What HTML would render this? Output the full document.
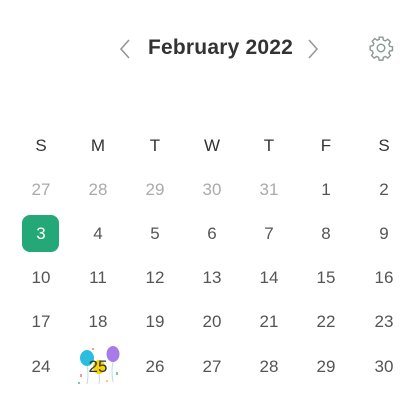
<!DOCTYPE html>
<html><head><style>
body{margin:0;width:420px;height:420px;background:#fff;font-family:"Liberation Sans",sans-serif;position:relative;overflow:hidden}
.t{position:absolute;font-size:21px;font-weight:bold;color:#333;left:148px;top:36px;letter-spacing:0.2px}
.c{position:absolute;width:50px;text-align:center;font-size:17px;color:#555;line-height:20px}
.g{color:#aaa}
.h{color:#333}
.sel{position:absolute;left:22px;top:215px;width:37px;height:37px;border-radius:8px;background:#24a878}
</style></head><body>
<svg style="position:absolute;left:118px;top:38px" width="14" height="22"><path d="M11 2 L3 11 L11 20" stroke="#999" stroke-width="1.6" fill="none"/></svg>
<div class="t">February 2022</div>
<svg style="position:absolute;left:306px;top:38px" width="14" height="22"><path d="M3 2 L11 11 L3 20" stroke="#999" stroke-width="1.6" fill="none"/></svg>
<svg style="position:absolute;left:368px;top:35px" width="26" height="26" viewBox="0 0 24 24"><path fill="none" stroke="#8a9a92" stroke-width="1.3" d="M10.3 2h3.4l.5 2.6 1.9.8 2.2-1.5 2.4 2.4-1.5 2.2.8 1.9 2.6.5v3.4l-2.6.5-.8 1.9 1.5 2.2-2.4 2.4-2.2-1.5-1.9.8-.5 2.6h-3.4l-.5-2.6-1.9-.8-2.2 1.5-2.4-2.4 1.5-2.2-.8-1.9L2 13.7v-3.4l2.6-.5.8-1.9-1.5-2.2 2.4-2.4 2.2 1.5 1.9-.8z"/><circle cx="12" cy="12" r="3.5" fill="none" stroke="#8a9a92" stroke-width="1.3"/></svg>
<div class="sel"></div>
<div id="grid"></div>
<svg style="position:absolute;left:76px;top:344px" width="46" height="42">
<ellipse cx="11" cy="14" rx="7" ry="8" fill="#2bbde0"/><ellipse cx="37" cy="10" rx="6.5" ry="8" fill="#a97be8"/><ellipse cx="23" cy="23" rx="6" ry="7" fill="#f5d400"/>
<path d="M11 22 q2 8 0 18 M37 18 q-2 8 0 20 M23 30 q1 5 0 10" stroke="#bde" stroke-width="1" fill="none"/>
<rect x="4" y="30" width="2" height="3" fill="#e9a"/><rect x="40" y="28" width="2" height="3" fill="#7c9"/><rect x="30" y="36" width="2" height="2" fill="#fc6"/><rect x="16" y="4" width="2" height="2" fill="#e9a"/><rect x="2" y="38" width="2" height="2" fill="#7c9"/>
</svg>
<div class="c" style="left:73px;top:357px;color:#333">25</div>
<script>
var cx=[41,98,155,212,269,326,384],h=["S","M","T","W","T","F","S"],s="";
h.forEach((d,i)=>s+=`<div class="c h" style="left:${cx[i]-25}px;top:136px">${d}</div>`);
var days=[27,28,29,30,31,1,2];for(var d=3;d<=30;d++)days.push(d);
var ry=[180,224,268,312,357];
days.forEach((d,i)=>{var r=Math.floor(i/7),c=i%7;var cl=i<5?"c g":"c";var st=d==3&&r==1?"color:#fff;":"";if(d==25)return;s+=`<div class="${cl}" style="left:${cx[c]-25}px;top:${ry[r]}px;${st}">${d}</div>`});
document.getElementById("grid").innerHTML=s;
</script>
</body></html>
